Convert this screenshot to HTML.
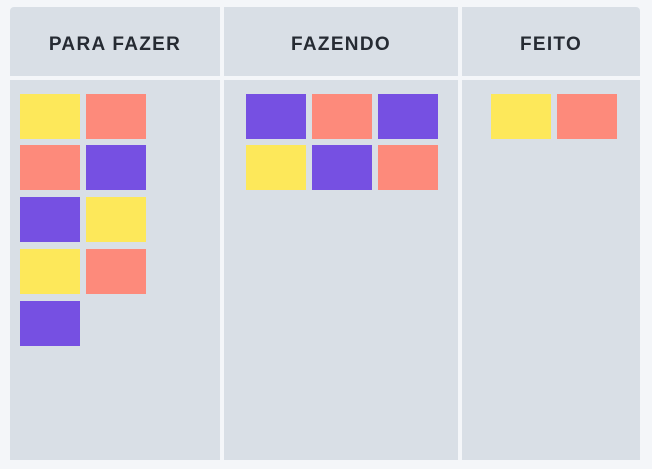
<!DOCTYPE html>
<html><head><style>
body{margin:0;width:652px;height:469px;background:#f4f6f9;position:relative;overflow:hidden;font-family:"Liberation Sans",sans-serif}
.p{position:absolute;background:#d9dfe6}
.h{position:absolute;top:10px;height:69px;display:flex;align-items:center;justify-content:center;font-weight:bold;font-size:19px;color:#262b33;letter-spacing:1.3px}
.c{position:absolute;width:60px;height:45px}
.y{background:#fde85a}.s{background:#fd8a7b}.v{background:#7650e2}
</style></head><body>
<div class="p" style="left:10px;top:7px;width:210px;height:69px;border-radius:4px 0 0 0"></div>
<div class="p" style="left:224px;top:7px;width:234px;height:69px"></div>
<div class="p" style="left:462px;top:7px;width:178px;height:69px;border-radius:0 4px 0 0"></div>
<div class="p" style="left:10px;top:80px;width:210px;height:380px"></div>
<div class="p" style="left:224px;top:80px;width:234px;height:380px"></div>
<div class="p" style="left:462px;top:80px;width:178px;height:380px"></div>
<div class="h" style="left:10px;width:210px">PARA FAZER</div>
<div class="h" style="left:224px;width:234px">FAZENDO</div>
<div class="h" style="left:462px;width:178px">FEITO</div>

<div class="c y" style="left:20px;top:94px"></div>
<div class="c s" style="left:86px;top:94px"></div>
<div class="c s" style="left:20px;top:145px"></div>
<div class="c v" style="left:86px;top:145px"></div>
<div class="c v" style="left:20px;top:197px"></div>
<div class="c y" style="left:86px;top:197px"></div>
<div class="c y" style="left:20px;top:249px"></div>
<div class="c s" style="left:86px;top:249px"></div>
<div class="c v" style="left:20px;top:301px"></div>

<div class="c v" style="left:246px;top:94px"></div>
<div class="c s" style="left:312px;top:94px"></div>
<div class="c v" style="left:378px;top:94px"></div>
<div class="c y" style="left:246px;top:145px"></div>
<div class="c v" style="left:312px;top:145px"></div>
<div class="c s" style="left:378px;top:145px"></div>

<div class="c y" style="left:491px;top:94px"></div>
<div class="c s" style="left:557px;top:94px"></div>
</body></html>
